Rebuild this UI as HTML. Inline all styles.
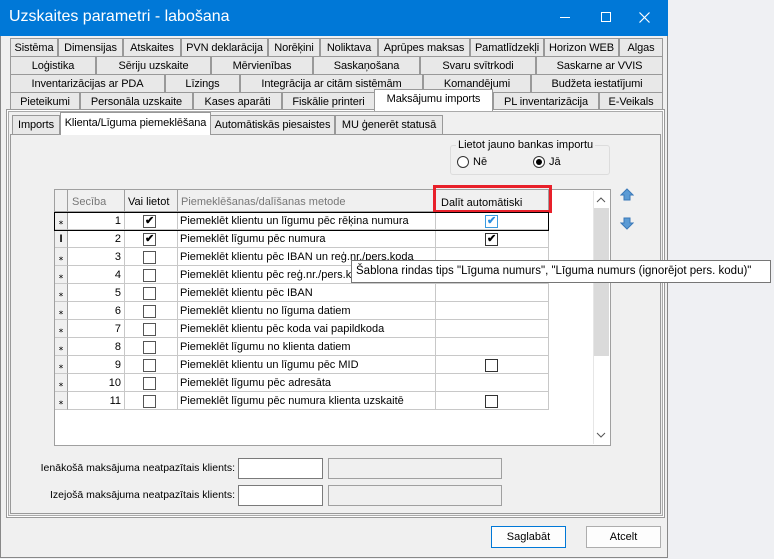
<!DOCTYPE html>
<html><head><meta charset="utf-8"><style>
*{box-sizing:border-box;margin:0;padding:0}
body{width:774px;height:559px;background:#eff0f3;font-family:"Liberation Sans",sans-serif;font-size:11px;color:#000;position:relative;overflow:hidden}
.a{position:absolute;white-space:nowrap}
.win{left:0;top:0;width:668px;height:558px;background:#f0f0f0;border:1px solid #888}
.title{left:0;top:0;width:668px;height:36px;background:#0078d7;color:#fff;font-size:16px;line-height:34px;padding-left:9px}
.t{position:absolute;height:18px;border:1px solid #999;border-bottom:none;background:#e8e8e8;text-align:center;line-height:18px;white-space:nowrap;font-size:11px;letter-spacing:-0.1px}
.st{position:absolute;height:19px;border:1px solid #999;border-bottom:none;background:#e8e8e8;text-align:center;line-height:19px;white-space:nowrap;letter-spacing:-0.1px}
.panel{border:1px solid #999}
.cell{position:absolute;border-right:1px solid #c8c8c8;border-bottom:1px solid #c8c8c8;height:18px;line-height:18px;white-space:nowrap;overflow:hidden}
.cb{position:absolute;width:13px;height:13px;border:1px solid #333;background:#fff}
.ck{position:absolute;left:1px;top:-2px;font-size:11px;font-weight:bold}
.btn{position:absolute;height:22px;border:1px solid #adadad;background:#fdfdfd;text-align:center;line-height:20px}
</style></head><body>
<div class="a win"></div>
<div class="a title">Uzskaites parametri - labošana</div>
<div class="a" style="left:560px;top:17px;width:10px;height:1px;background:#fff"></div>
<div class="a" style="left:601px;top:12px;width:10px;height:10px;border:1px solid #fff"></div>
<svg class="a" style="left:639px;top:12px" width="11" height="11"><path d="M0.5 0.5L10.5 10.5M10.5 0.5L0.5 10.5" stroke="#fff" stroke-width="1.2"/></svg>

<div class="t" style="left:10px;top:38px;width:48px">Sistēma</div>
<div class="t" style="left:58px;top:38px;width:65px">Dimensijas</div>
<div class="t" style="left:123px;top:38px;width:58px">Atskaites</div>
<div class="t" style="left:181px;top:38px;width:87px">PVN deklarācija</div>
<div class="t" style="left:268px;top:38px;width:52px">Norēķini</div>
<div class="t" style="left:320px;top:38px;width:58px">Noliktava</div>
<div class="t" style="left:378px;top:38px;width:92px">Aprūpes maksas</div>
<div class="t" style="left:470px;top:38px;width:74px">Pamatlīdzekļi</div>
<div class="t" style="left:544px;top:38px;width:75px">Horizon WEB</div>
<div class="t" style="left:619px;top:38px;width:44px">Algas</div>
<div class="t" style="left:10px;top:56px;width:86px">Loģistika</div>
<div class="t" style="left:96px;top:56px;width:115px">Sēriju uzskaite</div>
<div class="t" style="left:211px;top:56px;width:102px">Mērvienības</div>
<div class="t" style="left:313px;top:56px;width:107px">Saskaņošana</div>
<div class="t" style="left:420px;top:56px;width:116px">Svaru svītrkodi</div>
<div class="t" style="left:536px;top:56px;width:127px">Saskarne ar VVIS</div>
<div class="t" style="left:10px;top:74px;width:155px">Inventarizācijas ar PDA</div>
<div class="t" style="left:165px;top:74px;width:75px">Līzings</div>
<div class="t" style="left:240px;top:74px;width:183px">Integrācija ar citām sistēmām</div>
<div class="t" style="left:423px;top:74px;width:108px">Komandējumi</div>
<div class="t" style="left:531px;top:74px;width:132px">Budžeta iestatījumi</div>
<div class="t" style="left:10px;top:92px;width:70px">Pieteikumi</div>
<div class="t" style="left:80px;top:92px;width:113px">Personāla uzskaite</div>
<div class="t" style="left:193px;top:92px;width:89px">Kases aparāti</div>
<div class="t" style="left:282px;top:92px;width:93px">Fiskālie printeri</div>
<div class="t" style="left:493px;top:92px;width:106px">PL inventarizācija</div>
<div class="t" style="left:599px;top:92px;width:64px">E-Veikals</div>

<div class="a panel" style="left:6px;top:109px;width:659px;height:409px;background:#fff"></div>
<div class="a panel" style="left:8px;top:111px;width:655px;height:405px;background:#f0f0f0;border-color:#aaa"></div>
<div class="t" style="left:374px;top:89px;width:119px;height:22px;background:#fff;line-height:19px">Maksājumu imports</div>

<div class="st" style="left:12px;top:115px;width:48px">Imports</div>
<div class="st" style="left:210px;top:115px;width:125px">Automātiskās piesaistes</div>
<div class="st" style="left:335px;top:115px;width:108px">MU ģenerēt statusā</div>
<div class="a panel" style="left:10px;top:134px;width:651px;height:380px;background:#f0f0f0"></div>
<div class="st" style="left:60px;top:112px;width:151px;height:23px;background:#fff;line-height:20px">Klienta/Līguma piemeklēšana</div>

<div class="a" style="left:450px;top:145px;width:160px;height:30px;border:1px solid #dcdcdc;border-radius:3px"></div>
<div class="a" style="left:456px;top:139px;background:#f0f0f0;padding:0 2px">Lietot jauno bankas importu</div>
<div class="a" style="left:457px;top:156px;width:12px;height:12px;border:1px solid #333;border-radius:50%;background:#fff"></div>
<div class="a" style="left:473px;top:156px">Nē</div>
<div class="a" style="left:533px;top:156px;width:12px;height:12px;border:1px solid #333;border-radius:50%;background:#fff"></div>
<div class="a" style="left:536px;top:159px;width:6px;height:6px;border-radius:50%;background:#000"></div>
<div class="a" style="left:549px;top:156px">Jā</div>

<div class="a" style="left:54px;top:189px;width:557px;height:257px;border:1px solid #a0a0a0;background:#fff"></div>
<div class="a" style="left:55px;top:190px;width:494px;height:22px;background:#f0f0f0;border-bottom:1px solid #a0a0a0"></div>
<div class="a" style="left:67px;top:190px;width:1px;height:22px;background:#a0a0a0"></div>
<div class="a" style="left:124px;top:190px;width:1px;height:22px;background:#a0a0a0"></div>
<div class="a" style="left:177px;top:190px;width:1px;height:22px;background:#a0a0a0"></div>
<div class="a" style="left:435px;top:190px;width:1px;height:22px;background:#a0a0a0"></div>
<div class="a" style="left:548px;top:190px;width:1px;height:22px;background:#a0a0a0"></div>
<div class="a" style="left:72px;top:196px;color:#777">Secība</div>
<div class="a" style="left:128px;top:196px">Vai lietot</div>
<div class="a" style="left:181px;top:196px;color:#777">Piemeklēšanas/dalīšanas metode</div>
<div class="a" style="left:441px;top:197px">Dalīt automātiski</div>
<div class="a" style="left:433px;top:185px;width:119px;height:28px;border:3px solid #e8202a"></div>

<div id="rows"></div>
<div class="a" style="left:593px;top:191px;width:17px;height:253px;background:#fff;border-left:1px solid #e6e6e6"></div>
<div class="a" style="left:594px;top:208px;width:15px;height:148px;background:#dadada"></div>
<svg class="a" style="left:596px;top:196px" width="10" height="8"><path d="M1 6L5 2L9 6" stroke="#555" fill="none"/></svg>
<svg class="a" style="left:596px;top:431px" width="10" height="8"><path d="M1 2L5 6L9 2" stroke="#555" fill="none"/></svg>

<svg class="a" style="left:620px;top:187px" width="14" height="45"><path d="M7 2 L13 8 H10 V13 H4 V8 H1 Z" fill="#5b9bd5" stroke="#3a78b8"/><path d="M7 42 L13 36 H10 V31 H4 V36 H1 Z" fill="#5b9bd5" stroke="#3a78b8"/></svg>

<div class="a" style="left:351px;top:260px;width:420px;height:23px;background:#fff;border:1px solid #767676;padding-left:4px;line-height:21px;font-size:11.5px;z-index:5">Šablona rindas tips "Līguma numurs", "Līguma numurs (ignorējot pers. kodu)"</div>

<div class="a" style="left:20px;top:462px;width:215px;text-align:right;font-size:10.5px">Ienākošā maksājuma neatpazītais klients:</div>
<div class="a" style="left:238px;top:458px;width:85px;height:21px;border:1px solid #7a7a7a;background:#fff"></div>
<div class="a" style="left:328px;top:458px;width:174px;height:21px;border:1px solid #a0a0a0;background:#f0f0f0"></div>
<div class="a" style="left:20px;top:489px;width:215px;text-align:right;font-size:10.5px">Izejošā maksājuma neatpazītais klients:</div>
<div class="a" style="left:238px;top:485px;width:85px;height:21px;border:1px solid #7a7a7a;background:#fff"></div>
<div class="a" style="left:328px;top:485px;width:174px;height:21px;border:1px solid #a0a0a0;background:#f0f0f0"></div>

<div class="btn" style="left:491px;top:526px;width:75px;border-color:#0078d7">Saglabāt</div>
<div class="btn" style="left:586px;top:526px;width:75px">Atcelt</div>

<script>
var d=[["1",1,"Piemeklēt klientu un līgumu pēc rēķina numura",2],["2",1,"Piemeklēt līgumu pēc numura",1],["3",0,"Piemeklēt klientu pēc IBAN un reģ.nr./pers.koda",-1],["4",0,"Piemeklēt klientu pēc reģ.nr./pers.koda",-1],["5",0,"Piemeklēt klientu pēc IBAN",-1],["6",0,"Piemeklēt klientu no līguma datiem",-1],["7",0,"Piemeklēt klientu pēc koda vai papildkoda",-1],["8",0,"Piemeklēt līgumu no klienta datiem",-1],["9",0,"Piemeklēt klientu un līgumu pēc MID",0],["10",0,"Piemeklēt līgumu pēc adresāta",-1],["11",0,"Piemeklēt līgumu pēc numura klienta uzskaitē",0]];
var h="";
d.forEach(function(r,i){var y=212+i*18;
h+='<div class="cell" style="left:55px;top:'+y+'px;width:13px;background:#f0f0f0;font-size:9px;text-align:center;border-right-color:#a0a0a0">'+(i==1?'<b style="font-size:11px">I</b>':'⁎')+'</div>';
h+='<div class="cell" style="left:68px;top:'+y+'px;width:57px;text-align:right;padding-right:3px">'+r[0]+'</div>';
h+='<div class="cell" style="left:125px;top:'+y+'px;width:53px"></div>';
h+='<div class="cb" style="left:143px;top:'+(y+3)+'px;border-color:#555">'+(r[1]?'<span class="ck">✔</span>':'')+'</div>';
h+='<div class="cell" style="left:178px;top:'+y+'px;width:258px;padding-left:2px">'+r[2]+'</div>';
h+='<div class="cell" style="left:436px;top:'+y+'px;width:113px"></div>';
if(r[3]>=0)h+='<div class="cb" style="left:485px;top:'+(y+3)+'px;'+(r[3]==2?'border-color:#3b9be0;color:#2a8ee0':'')+'">'+(r[3]?'<span class="ck">✔</span>':'')+'</div>';
});
h+='<div class="a" style="left:54px;top:212px;width:495px;height:19px;border:1px solid #000"></div>';
document.getElementById("rows").innerHTML=h;
</script>
</body></html>
